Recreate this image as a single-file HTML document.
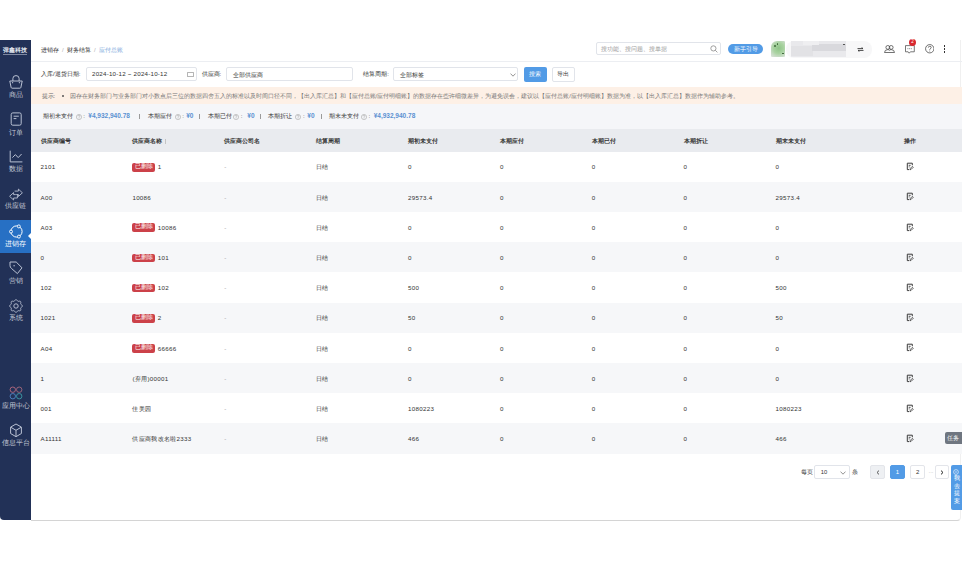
<!DOCTYPE html>
<html><head><meta charset="utf-8">
<style>
*{box-sizing:border-box;margin:0;padding:0}
html,body{width:962px;height:561px;overflow:hidden;background:#fff;font-family:"Liberation Sans",sans-serif;color:#333}
.c{font-size:1.3333em;position:relative;top:0.8px}
.hascjk .c{font-size:1em;top:0}
.abs{position:absolute}
#side{position:absolute;left:0;top:40px;width:31px;height:480px;background:#223157;border-bottom-left-radius:4px;overflow:hidden}
.navt{position:absolute;left:-4px;width:39px;text-align:center;font-size:7px;line-height:8px;white-space:nowrap}
#main{position:absolute;left:31px;top:40px;width:930px;height:481px;border-bottom:1px solid #d4d4d4;border-right:1px solid #f0f0f0;border-bottom-right-radius:4px}
.bc{position:absolute;top:46.4px;font-size:6px;line-height:8px;color:#333;white-space:nowrap}
.lbl{position:absolute;font-size:6px;line-height:8px;color:#333;white-space:nowrap}
.inp{position:absolute;border:1px solid #e1e4ea;border-radius:2px;background:#fff;font-size:6px;color:#333;white-space:nowrap}
#notice{position:absolute;left:31px;top:86.5px;width:931px;height:17px;background:#fdf0e6;font-size:6px;line-height:19px;color:#777;white-space:nowrap}
#summary{position:absolute;left:31px;top:103.5px;width:931px;height:25.5px;background:#f5f6f9}
.sm{position:absolute;top:112.3px;font-size:6px;line-height:8px;color:#333;white-space:nowrap}
.amt{position:absolute;top:112.3px;font-size:6.5px;line-height:8px;font-weight:bold;letter-spacing:0px;color:#5b91d2;white-space:nowrap}
#thead{position:absolute;left:31px;top:129px;width:931px;height:22.6px;background:#e9ebef}
.hcell{position:absolute;top:1.2px;height:22.6px;line-height:22.6px;font-size:6px;font-weight:bold;color:#333;white-space:nowrap}
.sort{display:inline-block;width:3px;height:5px;margin-left:1.2px;vertical-align:middle;position:relative;top:-0.5px;background:linear-gradient(#c4c4c4,#c4c4c4) 1px 0/1px 5px no-repeat}
.row{position:absolute;left:31px;width:931px;height:30.2px}
.cell{position:absolute;top:0.8px;height:30.2px;line-height:30.2px;font-size:6.2px;letter-spacing:0.3px;color:#333;white-space:nowrap}
.tag{display:inline-block;background:#cc4149;color:#fff;border-radius:2px;font-size:6px;letter-spacing:0;line-height:7.5px;height:8.5px;width:22.4px;text-align:center;vertical-align:middle;position:relative;top:-0.5px;margin-right:1px}
.op{position:absolute;left:875px;top:10.6px;line-height:0}
.pg{position:absolute;top:464.7px;height:14.5px;width:14.7px;border:1px solid #e3e5ea;border-radius:2px;background:#fff;font-size:6px;line-height:12.5px;text-align:center;color:#333}
</style></head><body>
<div id="side">
  <div class="abs" style="left:2.8px;top:6.6px;width:27px;color:#e3e7f0;font-size:6.2px;line-height:6px;font-weight:bold;white-space:nowrap"><span class="c">弹鑫科技</span></div>
  <div class="abs" style="left:2.5px;top:14.2px;width:24.5px;height:0.7px;background:#7d87a0"></div>
  <div class="abs" style="left:0;top:180px;width:31px;height:33px;background:#2770c4"></div>
  <div class="abs" style="left:28.2px;top:193.3px;width:0;height:0;border-top:3px solid transparent;border-bottom:3px solid transparent;border-right:3px solid #fff"></div>
  <div class="abs" style="left:8.6px;top:35.2px;line-height:0"><svg width="14" height="14" viewBox="0 0 14 14"><path d="M3.9 6V3.4A3.1 2.8 0 0 1 10.1 3.4V6" fill="none" stroke="#b9c1d3" stroke-width="1"/><path d="M0.8 6H13.2L11.9 12.4Q11.7 13.2 10.9 13.2H3.1Q2.3 13.2 2.1 12.4Z" fill="none" stroke="#b9c1d3" stroke-width="1" stroke-linejoin="round"/><circle cx="3.6" cy="7.7" r="0.65" fill="#b9c1d3"/><circle cx="10.4" cy="7.7" r="0.65" fill="#b9c1d3"/></svg></div><div class="navt" style="top:51.1px;color:#c3c9d6"><span class="c">商品</span></div><div class="abs" style="left:8.6px;top:72.4px;line-height:0"><svg width="14" height="14" viewBox="0 0 14 14"><rect x="2.2" y="0.9" width="10" height="12.3" rx="1.6" fill="none" stroke="#b9c1d3" stroke-width="1"/><path d="M4.6 4.2H9.8M4.6 6.6H7.4" stroke="#b9c1d3" stroke-width="1"/></svg></div><div class="navt" style="top:88.5px;color:#c3c9d6"><span class="c">订单</span></div><div class="abs" style="left:8.6px;top:110.2px;line-height:0"><svg width="14" height="14" viewBox="0 0 14 14"><path d="M1.2 0.7V11.9H13.4" fill="none" stroke="#b9c1d3" stroke-width="1"/><path d="M3.4 7.6L6.4 4.6L9.2 7.6L12.6 4" fill="none" stroke="#b9c1d3" stroke-width="1"/></svg></div><div class="navt" style="top:125.2px;color:#c3c9d6"><span class="c">数据</span></div><div class="abs" style="left:8.5px;top:148.0px;line-height:0"><svg width="14" height="13" viewBox="0 0 14 13"><path d="M5.6 3.1H9.4V1.1L13.4 4.8L9.4 8.5V6.5H7.2" fill="none" stroke="#b9c1d3" stroke-width="0.9" stroke-linejoin="round"/><path d="M8.4 6.6V10H4.6V12L0.6 8.3L4.6 4.6V6.6H6.8" fill="none" stroke="#b9c1d3" stroke-width="0.9" stroke-linejoin="round"/></svg></div><div class="navt" style="top:162.4px;color:#c3c9d6"><span class="c">供应链</span></div><div class="abs" style="left:8.5px;top:183.6px;line-height:0"><svg width="15" height="15" viewBox="0 0 15 15"><circle cx="7.5" cy="7.5" r="5.6" fill="none" stroke="#fff" stroke-width="1"/><circle cx="9.8" cy="2.4" r="1.5" fill="#2770c4" stroke="#fff" stroke-width="0.9"/><circle cx="2" cy="7.6" r="1.5" fill="#2770c4" stroke="#fff" stroke-width="0.9"/><circle cx="9.9" cy="12.6" r="1.5" fill="#2770c4" stroke="#fff" stroke-width="0.9"/></svg></div><div class="navt" style="top:199.8px;color:#ffffff"><span class="c">进销存</span></div><div class="abs" style="left:8.6px;top:221.0px;line-height:0"><svg width="14" height="14" viewBox="0 0 14 14"><path d="M1 1H7.2L13 6.8L8.4 12.6L2.4 7.4Q1 6.2 1 4.6Z" fill="none" stroke="#b9c1d3" stroke-width="1" stroke-linejoin="round"/><circle cx="5.1" cy="4.8" r="0.7" fill="#b9c1d3"/></svg></div><div class="navt" style="top:236.5px;color:#c3c9d6"><span class="c">营销</span></div><div class="abs" style="left:8.6px;top:258.5px;line-height:0"><svg width="14" height="14" viewBox="0 0 14 14"><path d="M13.40 7.00 L13.36 7.25 L13.26 7.49 L13.09 7.72 L12.88 7.93 L12.64 8.12 L12.40 8.30 L12.17 8.46 L11.97 8.61 L11.81 8.78 L11.71 8.95 L11.66 9.15 L11.65 9.37 L11.68 9.62 L11.73 9.90 L11.78 10.19 L11.81 10.50 L11.82 10.80 L11.77 11.08 L11.68 11.32 L11.53 11.53 L11.32 11.68 L11.08 11.77 L10.80 11.82 L10.50 11.81 L10.19 11.78 L9.90 11.73 L9.62 11.68 L9.37 11.65 L9.15 11.66 L8.95 11.71 L8.78 11.81 L8.61 11.97 L8.46 12.17 L8.30 12.40 L8.12 12.64 L7.93 12.88 L7.72 13.09 L7.49 13.26 L7.25 13.36 L7.00 13.40 L6.75 13.36 L6.51 13.26 L6.28 13.09 L6.07 12.88 L5.88 12.64 L5.70 12.40 L5.54 12.17 L5.39 11.97 L5.22 11.81 L5.05 11.71 L4.85 11.66 L4.63 11.65 L4.38 11.68 L4.10 11.73 L3.81 11.78 L3.50 11.81 L3.20 11.82 L2.92 11.77 L2.68 11.68 L2.47 11.53 L2.32 11.32 L2.23 11.08 L2.18 10.80 L2.19 10.50 L2.22 10.19 L2.27 9.90 L2.32 9.62 L2.35 9.37 L2.34 9.15 L2.29 8.95 L2.19 8.78 L2.03 8.61 L1.83 8.46 L1.60 8.30 L1.36 8.12 L1.12 7.93 L0.91 7.72 L0.74 7.49 L0.64 7.25 L0.60 7.00 L0.64 6.75 L0.74 6.51 L0.91 6.28 L1.12 6.07 L1.36 5.88 L1.60 5.70 L1.83 5.54 L2.03 5.39 L2.19 5.22 L2.29 5.05 L2.34 4.85 L2.35 4.63 L2.32 4.38 L2.27 4.10 L2.22 3.81 L2.19 3.50 L2.18 3.20 L2.23 2.92 L2.32 2.68 L2.47 2.47 L2.68 2.32 L2.92 2.23 L3.20 2.18 L3.50 2.19 L3.81 2.22 L4.10 2.27 L4.38 2.32 L4.63 2.35 L4.85 2.34 L5.05 2.29 L5.22 2.19 L5.39 2.03 L5.54 1.83 L5.70 1.60 L5.88 1.36 L6.07 1.12 L6.28 0.91 L6.51 0.74 L6.75 0.64 L7.00 0.60 L7.25 0.64 L7.49 0.74 L7.72 0.91 L7.93 1.12 L8.12 1.36 L8.30 1.60 L8.46 1.83 L8.61 2.03 L8.78 2.19 L8.95 2.29 L9.15 2.34 L9.37 2.35 L9.62 2.32 L9.90 2.27 L10.19 2.22 L10.50 2.19 L10.80 2.18 L11.08 2.23 L11.32 2.32 L11.53 2.47 L11.68 2.68 L11.77 2.92 L11.82 3.20 L11.81 3.50 L11.78 3.81 L11.73 4.10 L11.68 4.38 L11.65 4.63 L11.66 4.85 L11.71 5.05 L11.81 5.22 L11.97 5.39 L12.17 5.54 L12.40 5.70 L12.64 5.88 L12.88 6.07 L13.09 6.28 L13.26 6.51 L13.36 6.75 L13.40 7.00Z" fill="none" stroke="#b9c1d3" stroke-width="0.95" stroke-linejoin="round"/><circle cx="7" cy="7" r="2.2" fill="none" stroke="#b9c1d3" stroke-width="0.95"/></svg></div><div class="navt" style="top:274.1px;color:#c3c9d6"><span class="c">系统</span></div><div class="abs" style="left:8.5px;top:346.0px;line-height:0"><svg width="14" height="14" viewBox="0 0 14 14"><circle cx="3.8" cy="3.7" r="2.7" fill="none" stroke="#b8697f" stroke-width="0.9"/><circle cx="10.2" cy="3.7" r="2.7" fill="none" stroke="#a46a7e" stroke-width="0.9"/><circle cx="3.8" cy="10.2" r="2.7" fill="none" stroke="#4f86c6" stroke-width="0.9"/><circle cx="10.2" cy="10.2" r="2.7" fill="none" stroke="#3c9ca6" stroke-width="0.9"/></svg></div><div class="navt" style="top:361.8px;color:#c3c9d6"><span class="c">应用中心</span></div><div class="abs" style="left:8.6px;top:382.6px;line-height:0"><svg width="14" height="15" viewBox="0 0 14 15"><path d="M7 1L12.4 4.1V10.5L7 13.7L1.6 10.5V4.1Z" fill="none" stroke="#b9c1d3" stroke-width="1" stroke-linejoin="round"/><path d="M1.9 4.3L7 7.3L12.1 4.3M7 7.3V13.5" fill="none" stroke="#b9c1d3" stroke-width="1"/></svg></div><div class="navt" style="top:399.1px;color:#c3c9d6"><span class="c">信息平台</span></div>
</div>
<div id="main"></div>
<!-- header -->
<div class="bc" style="left:40.9px"><span class="c">进销存</span> <span style="color:#b0b0b0;margin:0 1.5px">/</span> <span class="c">财务结算</span> <span style="color:#b0b0b0;margin:0 1.5px">/</span> <span style="color:#80abdc"><span class="c">应付总账</span></span></div>
<div class="abs" style="left:31px;top:60.8px;width:931px;height:1px;background:#eceef2"></div>
<!-- search -->
<div class="inp" style="left:595.5px;top:42px;width:125px;height:13.4px;padding-left:4.6px;line-height:12.4px;color:#999;font-size:6px"><span class="c">搜功能、搜问题、搜单据</span></div>
<div class="abs" style="left:709.5px;top:44.6px;line-height:0"><svg width="8" height="8" viewBox="0 0 8 8"><circle cx="3.4" cy="3.4" r="2.6" fill="none" stroke="#888" stroke-width="0.8"/><path d="M5.3 5.3L7.4 7.4" stroke="#888" stroke-width="0.8"/></svg></div>
<div class="abs" style="left:728px;top:44px;width:35px;height:10px;border-radius:5px;background:#529be6;color:#fff;font-size:5.6px;line-height:10px;text-align:center;white-space:nowrap"><span class="c">新手引导</span></div>
<div class="abs" style="left:771.4px;top:41.1px;width:13.4px;height:16.4px;border-radius:6px 1px 1px 1px;background:radial-gradient(circle at 55% 45%,#8fc487 0%,#a9d3a1 45%,#c9dcc6 75%,#dfe5df 100%)"></div>
<div class="abs" style="left:773.5px;top:45px;width:2px;height:2px;background:#3f6b3a;border-radius:50%"></div>
<div class="abs" style="left:776.5px;top:43px;width:1.6px;height:1.6px;background:#3f6b3a;border-radius:50%"></div>
<div class="abs" style="left:782px;top:52.5px;width:1.8px;height:1.8px;background:#335e2f;border-radius:50%"></div>
<div class="abs" style="left:786px;top:40.5px;width:86px;height:17px;border-radius:8px;background:#f7f7f8"></div>
<div class="abs" style="left:791px;top:40.5px;width:55px;height:16.5px;background:#e9e9ec"></div>
<div class="abs" style="left:791px;top:46px;width:22px;height:10px;background:#e2e2e5"></div>
<div class="abs" style="left:812px;top:44px;width:34px;height:7px;background:#d9d9dd"></div>
<div class="abs" style="left:803px;top:40.5px;width:16px;height:4px;background:#efeff1"></div>
<div class="abs" style="left:842.5px;top:43.7px;width:2.2px;height:1.8px;background:#555"></div>
<div class="abs" style="left:856.5px;top:46.5px;line-height:0"><svg width="7" height="5" viewBox="0 0 7 5"><path d="M0.5 1.6H6L4.6 0.4M6.5 3.4H1L2.4 4.6" fill="none" stroke="#333" stroke-width="0.9"/></svg></div>
<div class="abs" style="left:884px;top:44.6px;line-height:0"><svg width="11" height="8" viewBox="0 0 11 8"><circle cx="3.8" cy="2.4" r="1.9" fill="none" stroke="#444" stroke-width="0.75"/><circle cx="7.2" cy="2.4" r="1.9" fill="none" stroke="#444" stroke-width="0.75"/><path d="M0.5 7.5Q0.6 4.7 3.8 4.6Q5.5 4.6 5.5 5.4Q5.5 4.6 7.2 4.6Q10.4 4.7 10.5 7.5Z" fill="none" stroke="#444" stroke-width="0.75" stroke-linejoin="round"/></svg></div>
<div class="abs" style="left:904.5px;top:44.8px;line-height:0"><svg width="10" height="9" viewBox="0 0 10 9"><path d="M0.5 0.6H9.3V6.8H5.4L4.2 8.2L3.2 6.8H0.5Z" fill="none" stroke="#555" stroke-width="0.8" stroke-linejoin="round"/><path d="M2.4 3.7H7.4" stroke="#555" stroke-width="0.7" stroke-dasharray="1 0.7"/></svg></div>
<div class="abs" style="left:909.2px;top:39.3px;width:6.8px;height:6.8px;border-radius:50%;background:#d9282f;color:#fff;font-size:4.5px;line-height:6.8px;text-align:center">2</div>
<div class="abs" style="left:924.8px;top:44.4px;line-height:0"><svg width="9.5" height="9.5" viewBox="0 0 10 10"><circle cx="5" cy="5" r="4.4" fill="none" stroke="#444" stroke-width="0.8"/><path d="M3.5 3.8Q3.5 2.4 5 2.4Q6.5 2.4 6.5 3.7Q6.5 4.5 5.5 5Q5 5.3 5 6.1" fill="none" stroke="#444" stroke-width="0.8"/><circle cx="5" cy="7.4" r="0.5" fill="#444"/></svg></div>
<div class="abs" style="left:943.6px;top:45.3px;width:1.4px;height:1.4px;background:#333"></div>
<div class="abs" style="left:943.6px;top:48.3px;width:1.4px;height:1.4px;background:#333"></div>
<div class="abs" style="left:943.6px;top:51.3px;width:1.4px;height:1.4px;background:#333"></div>
<!-- filter row -->
<div class="lbl" style="left:41px;top:69.9px"><span class="c">入库</span>/<span class="c">退货日期</span>:</div>
<div class="inp" style="left:85.5px;top:66.6px;width:111.3px;height:14.8px;padding-left:5.5px;line-height:12.8px;font-size:6.2px;letter-spacing:0.22px">2024-10-12 ~ 2024-10-12</div>
<div class="abs" style="left:187px;top:71.6px;width:7px;height:5px;border:0.7px solid #b5b5b5;border-top-width:1.3px;border-radius:0.5px"></div>
<div class="lbl" style="left:201.5px;top:69.9px"><span class="c">供应商</span>:</div>
<div class="inp" style="left:226px;top:66.6px;width:126.6px;height:14.8px;padding-left:5.5px;line-height:14.6px"><span class="c">全部供应商</span></div>
<div class="lbl" style="left:363.3px;top:69.9px"><span class="c">结算周期</span>:</div>
<div class="inp" style="left:393.3px;top:66.6px;width:125.2px;height:14.8px;padding-left:5.5px;line-height:14.6px"><span class="c">全部标签</span></div>
<div class="abs" style="left:509.5px;top:71.8px;line-height:0"><svg width="6" height="4" viewBox="0 0 6 4"><path d="M0.5 0.6L3 3.2L5.5 0.6" fill="none" stroke="#777" stroke-width="0.8"/></svg></div>
<div class="abs" style="left:523.7px;top:66.8px;width:23.2px;height:14.8px;background:#529be6;border-radius:2px;color:#fff;font-size:6px;line-height:14.8px;text-align:center"><span class="c">搜索</span></div>
<div class="inp" style="left:551.6px;top:66.8px;width:23px;height:14.8px;line-height:12.8px;text-align:center"><span class="c">导出</span></div>
<div id="notice"><span style="position:absolute;left:10.6px;color:#666"><span class="c">提示</span>:</span><span style="position:absolute;left:30.8px;top:8.2px;width:2px;height:2px;border-radius:50%;background:#555"></span><span style="position:absolute;left:38.5px;font-size:6px"><span class="c">因存在财务部门与业务部门对小数点后三位的数据四舍五入的标准以及时间口径不同，【出入库汇总】和【应付总账</span>/<span class="c">应付明细账】的数据存在些许细微差异，为避免误会，建议以【应付总账</span>/<span class="c">应付明细账】数据为准，以【出入库汇总】数据作为辅助参考。</span></span></div>
<div id="summary"></div>
<div class="sm" style="left:43.1px"><span class="c">期初未支付</span></div><div class="abs" style="left:75.8px;top:113.6px;line-height:0"><svg width="6" height="6" viewBox="0 0 6 6"><circle cx="3" cy="3" r="2.6" fill="none" stroke="#a8a8a8" stroke-width="0.6"/><path d="M2.1 2.3Q2.1 1.4 3 1.4Q3.9 1.4 3.9 2.2Q3.9 2.7 3.2 3.1Q3 3.3 3 3.8" fill="none" stroke="#a0a0a0" stroke-width="0.55"/><circle cx="3" cy="4.5" r="0.35" fill="#a0a0a0"/></svg></div><div class="sm" style="left:83.2px;color:#444">:</div><div class="amt" style="left:88.3px">¥4,932,940.78</div><div class="abs" style="left:139px;top:114.2px;width:0.7px;height:5.2px;background:#9a9a9a"></div><div class="sm" style="left:147.5px"><span class="c">本期应付</span></div><div class="abs" style="left:174.7px;top:113.6px;line-height:0"><svg width="6" height="6" viewBox="0 0 6 6"><circle cx="3" cy="3" r="2.6" fill="none" stroke="#a8a8a8" stroke-width="0.6"/><path d="M2.1 2.3Q2.1 1.4 3 1.4Q3.9 1.4 3.9 2.2Q3.9 2.7 3.2 3.1Q3 3.3 3 3.8" fill="none" stroke="#a0a0a0" stroke-width="0.55"/><circle cx="3" cy="4.5" r="0.35" fill="#a0a0a0"/></svg></div><div class="sm" style="left:182.3px;color:#444">:</div><div class="amt" style="left:186.2px">¥0</div><div class="abs" style="left:199.4px;top:114.2px;width:0.7px;height:5.2px;background:#9a9a9a"></div><div class="sm" style="left:207.5px"><span class="c">本期已付</span></div><div class="abs" style="left:233.2px;top:113.6px;line-height:0"><svg width="6" height="6" viewBox="0 0 6 6"><circle cx="3" cy="3" r="2.6" fill="none" stroke="#a8a8a8" stroke-width="0.6"/><path d="M2.1 2.3Q2.1 1.4 3 1.4Q3.9 1.4 3.9 2.2Q3.9 2.7 3.2 3.1Q3 3.3 3 3.8" fill="none" stroke="#a0a0a0" stroke-width="0.55"/><circle cx="3" cy="4.5" r="0.35" fill="#a0a0a0"/></svg></div><div class="sm" style="left:240.8px;color:#444">:</div><div class="amt" style="left:247.3px">¥0</div><div class="abs" style="left:260.0px;top:114.2px;width:0.7px;height:5.2px;background:#9a9a9a"></div><div class="sm" style="left:268.0px"><span class="c">本期折让</span></div><div class="abs" style="left:295.4px;top:113.6px;line-height:0"><svg width="6" height="6" viewBox="0 0 6 6"><circle cx="3" cy="3" r="2.6" fill="none" stroke="#a8a8a8" stroke-width="0.6"/><path d="M2.1 2.3Q2.1 1.4 3 1.4Q3.9 1.4 3.9 2.2Q3.9 2.7 3.2 3.1Q3 3.3 3 3.8" fill="none" stroke="#a0a0a0" stroke-width="0.55"/><circle cx="3" cy="4.5" r="0.35" fill="#a0a0a0"/></svg></div><div class="sm" style="left:303.0px;color:#444">:</div><div class="amt" style="left:307.3px">¥0</div><div class="abs" style="left:321.0px;top:114.2px;width:0.7px;height:5.2px;background:#9a9a9a"></div><div class="sm" style="left:328.7px"><span class="c">期末未支付</span></div><div class="abs" style="left:360.8px;top:113.6px;line-height:0"><svg width="6" height="6" viewBox="0 0 6 6"><circle cx="3" cy="3" r="2.6" fill="none" stroke="#a8a8a8" stroke-width="0.6"/><path d="M2.1 2.3Q2.1 1.4 3 1.4Q3.9 1.4 3.9 2.2Q3.9 2.7 3.2 3.1Q3 3.3 3 3.8" fill="none" stroke="#a0a0a0" stroke-width="0.55"/><circle cx="3" cy="4.5" r="0.35" fill="#a0a0a0"/></svg></div><div class="sm" style="left:368.5px;color:#444">:</div><div class="amt" style="left:373.7px">¥4,932,940.78</div>
<div id="thead"><div class="hcell" style="left:9.5px"><span class="c">供应商编号</span></div><div class="hcell" style="left:101.4px"><span class="c">供应商名称</span><span class=sort></span></div><div class="hcell" style="left:193.2px"><span class="c">供应商公司名</span></div><div class="hcell" style="left:285.1px"><span class="c">结算周期</span></div><div class="hcell" style="left:377.0px"><span class="c">期初未支付</span></div><div class="hcell" style="left:468.9px"><span class="c">本期应付</span></div><div class="hcell" style="left:560.8px"><span class="c">本期已付</span></div><div class="hcell" style="left:652.6px"><span class="c">本期折让</span></div><div class="hcell" style="left:744.5px"><span class="c">期末未支付</span></div><div class="hcell" style="left:873px"><span class="c">操作</span></div></div>
<div class="row" style="top:151.6px;background:#ffffff"><div class="cell" style="left:9.5px">2101</div><div class="cell" style="left:101.4px"><span class="tag"><span class="c">已删除</span></span> 1</div><div class="cell" style="left:193.2px"><span style="color:#999">-</span></div><div class="cell" style="left:285.1px"><span class="c">日结</span></div><div class="cell" style="left:377.0px">0</div><div class="cell" style="left:468.9px">0</div><div class="cell" style="left:560.8px">0</div><div class="cell" style="left:652.6px">0</div><div class="cell" style="left:744.5px">0</div><div class="op"><svg width="8" height="9" viewBox="0 0 8 9"><path d="M6.3 3.2V1.2H1.3V7.6H3.2" fill="none" stroke="#3a3a3a" stroke-width="1"/><path d="M2.7 3.3H4.6M2.7 4.9H3.7" stroke="#3a3a3a" stroke-width="0.9"/><path d="M4.1 7.8L4.4 6.3L6.4 4.3L7.3 5.2L5.3 7.2Z" fill="none" stroke="#3a3a3a" stroke-width="0.8"/></svg></div></div>
<div class="row" style="top:181.8px;background:#f6f7f9"><div class="cell" style="left:9.5px">A00</div><div class="cell" style="left:101.4px">10086</div><div class="cell" style="left:193.2px"><span style="color:#999">-</span></div><div class="cell" style="left:285.1px"><span class="c">日结</span></div><div class="cell" style="left:377.0px">29573.4</div><div class="cell" style="left:468.9px">0</div><div class="cell" style="left:560.8px">0</div><div class="cell" style="left:652.6px">0</div><div class="cell" style="left:744.5px">29573.4</div><div class="op"><svg width="8" height="9" viewBox="0 0 8 9"><path d="M6.3 3.2V1.2H1.3V7.6H3.2" fill="none" stroke="#3a3a3a" stroke-width="1"/><path d="M2.7 3.3H4.6M2.7 4.9H3.7" stroke="#3a3a3a" stroke-width="0.9"/><path d="M4.1 7.8L4.4 6.3L6.4 4.3L7.3 5.2L5.3 7.2Z" fill="none" stroke="#3a3a3a" stroke-width="0.8"/></svg></div></div>
<div class="row" style="top:212.0px;background:#ffffff"><div class="cell" style="left:9.5px">A03</div><div class="cell" style="left:101.4px"><span class="tag"><span class="c">已删除</span></span> 10086</div><div class="cell" style="left:193.2px"><span style="color:#999">-</span></div><div class="cell" style="left:285.1px"><span class="c">日结</span></div><div class="cell" style="left:377.0px">0</div><div class="cell" style="left:468.9px">0</div><div class="cell" style="left:560.8px">0</div><div class="cell" style="left:652.6px">0</div><div class="cell" style="left:744.5px">0</div><div class="op"><svg width="8" height="9" viewBox="0 0 8 9"><path d="M6.3 3.2V1.2H1.3V7.6H3.2" fill="none" stroke="#3a3a3a" stroke-width="1"/><path d="M2.7 3.3H4.6M2.7 4.9H3.7" stroke="#3a3a3a" stroke-width="0.9"/><path d="M4.1 7.8L4.4 6.3L6.4 4.3L7.3 5.2L5.3 7.2Z" fill="none" stroke="#3a3a3a" stroke-width="0.8"/></svg></div></div>
<div class="row" style="top:242.2px;background:#f6f7f9"><div class="cell" style="left:9.5px">0</div><div class="cell" style="left:101.4px"><span class="tag"><span class="c">已删除</span></span> 101</div><div class="cell" style="left:193.2px"><span style="color:#999">-</span></div><div class="cell" style="left:285.1px"><span class="c">日结</span></div><div class="cell" style="left:377.0px">0</div><div class="cell" style="left:468.9px">0</div><div class="cell" style="left:560.8px">0</div><div class="cell" style="left:652.6px">0</div><div class="cell" style="left:744.5px">0</div><div class="op"><svg width="8" height="9" viewBox="0 0 8 9"><path d="M6.3 3.2V1.2H1.3V7.6H3.2" fill="none" stroke="#3a3a3a" stroke-width="1"/><path d="M2.7 3.3H4.6M2.7 4.9H3.7" stroke="#3a3a3a" stroke-width="0.9"/><path d="M4.1 7.8L4.4 6.3L6.4 4.3L7.3 5.2L5.3 7.2Z" fill="none" stroke="#3a3a3a" stroke-width="0.8"/></svg></div></div>
<div class="row" style="top:272.4px;background:#ffffff"><div class="cell" style="left:9.5px">102</div><div class="cell" style="left:101.4px"><span class="tag"><span class="c">已删除</span></span> 102</div><div class="cell" style="left:193.2px"><span style="color:#999">-</span></div><div class="cell" style="left:285.1px"><span class="c">日结</span></div><div class="cell" style="left:377.0px">500</div><div class="cell" style="left:468.9px">0</div><div class="cell" style="left:560.8px">0</div><div class="cell" style="left:652.6px">0</div><div class="cell" style="left:744.5px">500</div><div class="op"><svg width="8" height="9" viewBox="0 0 8 9"><path d="M6.3 3.2V1.2H1.3V7.6H3.2" fill="none" stroke="#3a3a3a" stroke-width="1"/><path d="M2.7 3.3H4.6M2.7 4.9H3.7" stroke="#3a3a3a" stroke-width="0.9"/><path d="M4.1 7.8L4.4 6.3L6.4 4.3L7.3 5.2L5.3 7.2Z" fill="none" stroke="#3a3a3a" stroke-width="0.8"/></svg></div></div>
<div class="row" style="top:302.6px;background:#f6f7f9"><div class="cell" style="left:9.5px">1021</div><div class="cell" style="left:101.4px"><span class="tag"><span class="c">已删除</span></span> 2</div><div class="cell" style="left:193.2px"><span style="color:#999">-</span></div><div class="cell" style="left:285.1px"><span class="c">日结</span></div><div class="cell" style="left:377.0px">50</div><div class="cell" style="left:468.9px">0</div><div class="cell" style="left:560.8px">0</div><div class="cell" style="left:652.6px">0</div><div class="cell" style="left:744.5px">50</div><div class="op"><svg width="8" height="9" viewBox="0 0 8 9"><path d="M6.3 3.2V1.2H1.3V7.6H3.2" fill="none" stroke="#3a3a3a" stroke-width="1"/><path d="M2.7 3.3H4.6M2.7 4.9H3.7" stroke="#3a3a3a" stroke-width="0.9"/><path d="M4.1 7.8L4.4 6.3L6.4 4.3L7.3 5.2L5.3 7.2Z" fill="none" stroke="#3a3a3a" stroke-width="0.8"/></svg></div></div>
<div class="row" style="top:332.8px;background:#ffffff"><div class="cell" style="left:9.5px">A04</div><div class="cell" style="left:101.4px"><span class="tag"><span class="c">已删除</span></span> 66666</div><div class="cell" style="left:193.2px"><span style="color:#999">-</span></div><div class="cell" style="left:285.1px"><span class="c">日结</span></div><div class="cell" style="left:377.0px">0</div><div class="cell" style="left:468.9px">0</div><div class="cell" style="left:560.8px">0</div><div class="cell" style="left:652.6px">0</div><div class="cell" style="left:744.5px">0</div><div class="op"><svg width="8" height="9" viewBox="0 0 8 9"><path d="M6.3 3.2V1.2H1.3V7.6H3.2" fill="none" stroke="#3a3a3a" stroke-width="1"/><path d="M2.7 3.3H4.6M2.7 4.9H3.7" stroke="#3a3a3a" stroke-width="0.9"/><path d="M4.1 7.8L4.4 6.3L6.4 4.3L7.3 5.2L5.3 7.2Z" fill="none" stroke="#3a3a3a" stroke-width="0.8"/></svg></div></div>
<div class="row" style="top:363.0px;background:#f6f7f9"><div class="cell" style="left:9.5px">1</div><div class="cell" style="left:101.4px">(<span class="c">弃用</span>)00001</div><div class="cell" style="left:193.2px"><span style="color:#999">-</span></div><div class="cell" style="left:285.1px"><span class="c">日结</span></div><div class="cell" style="left:377.0px">0</div><div class="cell" style="left:468.9px">0</div><div class="cell" style="left:560.8px">0</div><div class="cell" style="left:652.6px">0</div><div class="cell" style="left:744.5px">0</div><div class="op"><svg width="8" height="9" viewBox="0 0 8 9"><path d="M6.3 3.2V1.2H1.3V7.6H3.2" fill="none" stroke="#3a3a3a" stroke-width="1"/><path d="M2.7 3.3H4.6M2.7 4.9H3.7" stroke="#3a3a3a" stroke-width="0.9"/><path d="M4.1 7.8L4.4 6.3L6.4 4.3L7.3 5.2L5.3 7.2Z" fill="none" stroke="#3a3a3a" stroke-width="0.8"/></svg></div></div>
<div class="row" style="top:393.2px;background:#ffffff"><div class="cell" style="left:9.5px">001</div><div class="cell" style="left:101.4px"><span class="c">佳美园</span></div><div class="cell" style="left:193.2px"><span style="color:#999">-</span></div><div class="cell" style="left:285.1px"><span class="c">日结</span></div><div class="cell" style="left:377.0px">1080223</div><div class="cell" style="left:468.9px">0</div><div class="cell" style="left:560.8px">0</div><div class="cell" style="left:652.6px">0</div><div class="cell" style="left:744.5px">1080223</div><div class="op"><svg width="8" height="9" viewBox="0 0 8 9"><path d="M6.3 3.2V1.2H1.3V7.6H3.2" fill="none" stroke="#3a3a3a" stroke-width="1"/><path d="M2.7 3.3H4.6M2.7 4.9H3.7" stroke="#3a3a3a" stroke-width="0.9"/><path d="M4.1 7.8L4.4 6.3L6.4 4.3L7.3 5.2L5.3 7.2Z" fill="none" stroke="#3a3a3a" stroke-width="0.8"/></svg></div></div>
<div class="row" style="top:423.4px;background:#f6f7f9"><div class="cell" style="left:9.5px">A11111</div><div class="cell" style="left:101.4px"><span class="c">供应商我改名啦</span>2333</div><div class="cell" style="left:193.2px"><span style="color:#999">-</span></div><div class="cell" style="left:285.1px"><span class="c">日结</span></div><div class="cell" style="left:377.0px">466</div><div class="cell" style="left:468.9px">0</div><div class="cell" style="left:560.8px">0</div><div class="cell" style="left:652.6px">0</div><div class="cell" style="left:744.5px">466</div><div class="op"><svg width="8" height="9" viewBox="0 0 8 9"><path d="M6.3 3.2V1.2H1.3V7.6H3.2" fill="none" stroke="#3a3a3a" stroke-width="1"/><path d="M2.7 3.3H4.6M2.7 4.9H3.7" stroke="#3a3a3a" stroke-width="0.9"/><path d="M4.1 7.8L4.4 6.3L6.4 4.3L7.3 5.2L5.3 7.2Z" fill="none" stroke="#3a3a3a" stroke-width="0.8"/></svg></div></div>
<!-- pagination -->
<div class="lbl" style="left:800.6px;top:468px"><span class="c">每页</span></div>
<div class="inp" style="left:814.3px;top:464.7px;width:35.3px;height:14.5px;padding-left:5.5px;line-height:12.5px;font-size:5.8px">10</div>
<div class="abs" style="left:840px;top:470px;line-height:0"><svg width="6" height="4" viewBox="0 0 6 4"><path d="M0.5 0.6L3 3.2L5.5 0.6" fill="none" stroke="#777" stroke-width="0.8"/></svg></div>
<div class="lbl" style="left:851.6px;top:468px"><span class="c">条</span></div>
<div class="pg" style="left:870.2px;background:#eef0f3;line-height:0;padding-top:4.5px"><svg width="4" height="5" viewBox="0 0 4 5"><path d="M3 0.6L1 2.5L3 4.4" fill="none" stroke="#555" stroke-width="1"/></svg></div>
<div class="pg" style="left:890.2px;background:#529be6;border-color:#529be6;color:#fff">1</div>
<div class="pg" style="left:910.4px">2</div>
<div class="abs" style="left:928.5px;top:468px;font-size:5px;line-height:8px;color:#aaa">···</div>
<div class="pg" style="left:934.5px;line-height:0;padding-top:4.5px"><svg width="4" height="5" viewBox="0 0 4 5"><path d="M1 0.6L3 2.5L1 4.4" fill="none" stroke="#222" stroke-width="1"/></svg></div>
<!-- floating -->
<div class="abs" style="left:944.7px;top:431.8px;width:20px;height:12.7px;border-radius:2px;background:#6f7680;color:#fff;font-size:5.5px;line-height:12.7px;padding-left:2.5px;white-space:nowrap"><span class="c">任务</span></div>
<div class="abs" style="left:951px;top:465px;width:12px;height:45px;border-radius:2px 0 0 2px;background:#529be6"></div>
<div class="abs" style="left:953.4px;top:469.2px;line-height:0"><svg width="6" height="6" viewBox="0 0 6 6"><circle cx="3" cy="3" r="2.4" fill="none" stroke="#fff" stroke-width="0.6"/><path d="M1.9 3H4.1" stroke="#fff" stroke-width="0.6"/></svg></div>
<div class="abs" style="left:952.5px;top:475.3px;width:9px;font-size:5.6px;line-height:7.5px;color:#fff;text-align:center;white-space:normal;word-break:break-all"><span class="c">我去提案</span></div>
<script>
(function(){var s=document.createElement('span');s.style.cssText='position:absolute;left:-999px;font-size:100px;font-family:"Liberation Sans",sans-serif';s.textContent='\u4f9b';document.body.appendChild(s);var w=s.getBoundingClientRect().width;s.parentNode.removeChild(s);if(w>90)document.documentElement.className='hascjk';})();
</script>
</body></html>
